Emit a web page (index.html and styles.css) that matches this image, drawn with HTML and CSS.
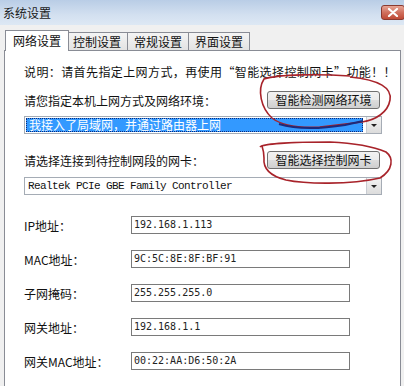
FILE: index.html
```html
<!DOCTYPE html>
<html lang="zh-CN">
<head>
  <meta charset="UTF-8">
  <title>系统设置</title>
  <link rel="stylesheet" href="styles.css">
</head>
<body>
  <div class="window">
    <div class="titlebar">
      <span class="title">系统设置</span>
      <span class="close">
        <svg width="12" height="9" viewBox="0 0 12 9"><path d="M2 1 L10 8 M10 1 L2 8" stroke="#fff" stroke-width="2.2" stroke-linecap="round"/></svg>
      </span>
    </div>

    <div class="tabs">
      <div class="tab active">网络设置</div>
      <div class="tab">控制设置</div>
      <div class="tab">常规设置</div>
      <div class="tab">界面设置</div>
    </div>

    <div class="panel">
      <p class="note">说明：请首先指定上网方式，再使用“智能选择控制网卡”功能！！</p>

      <div class="row">
        <span>请您指定本机上网方式及网络环境：</span>
        <button class="btn">智能检测网络环境</button>
      </div>
      <div class="combo selected">
        <span class="value">我接入了局域网，并通过路由器上网</span>
        <span class="arrow"></span>
      </div>

      <div class="row second">
        <span>请选择连接到待控制网段的网卡：</span>
        <button class="btn">智能选择控制网卡</button>
      </div>
      <div class="combo">
        <span class="value mono">Realtek PCIe GBE Family Controller</span>
        <span class="arrow"></span>
      </div>

      <div class="fields">
        <label>IP地址：</label><div class="field">192.168.1.113</div>
        <label>MAC地址：</label><div class="field">9C:5C:8E:8F:BF:91</div>
        <label>子网掩码：</label><div class="field">255.255.255.0</div>
        <label>网关地址：</label><div class="field">192.168.1.1</div>
        <label>网关MAC地址：</label><div class="field">00:22:AA:D6:50:2A</div>
      </div>
    </div>

    <!-- 手绘标记 -->
    <svg class="marks" width="404" height="386" viewBox="0 0 404 386">
      <path d="M350 76 C320 74 280 74 264 79 C257 90 261 108 272 118 C282 126 300 128 320 127 L362 122 C376 120 388 112 390 100 C392 88 380 80 350 77" fill="none" stroke="#a8232a" stroke-width="1.6"/>
      <path d="M279 124 C295 129 320 129 345 125 L363 121" fill="none" stroke="#1d2a7a" stroke-width="2"/>
      <path d="M260 147 C262 144 290 142 330 142 C352 143 372 146 386 152 C394 158 393 170 380 178 C350 185 305 184 286 180 C270 176 263 168 264 158 C264 152 263 149 262 146" fill="none" stroke="#a8232a" stroke-width="1.6"/>
    </svg>
  </div>
</body>
</html>
```

FILE: styles.css
```css
body {
  margin: 0;
  font-family: "Noto Sans CJK SC", "Liberation Sans", sans-serif;
  font-size: 12px;
  color: #111;
  background-color: #f0f0f0;
}
.window {
  position: relative;
  width: 404px;
  height: 386px;
  overflow: hidden;
  background-color: #f0f0f0;
}
.titlebar {
  height: 25px;
  box-sizing: border-box;
  padding: 5px 0 0 3px;
  display: flex;
  justify-content: space-between;
  align-items: flex-start;
  background: linear-gradient(#b9cde6, #d3e0f0 60%, #dde8f4);
}
.title {
  line-height: 15px;
  font-size: 12px;
  color: #1a1a1a;
}
.close {
  width: 24px;
  height: 15px;
  box-sizing: border-box;
  margin-right: -1px;
  border: 1px solid #8a3a30;
  border-radius: 3px;
  background: linear-gradient(#e7a596, #d0705e 50%, #bf4a36);
  display: flex;
  align-items: center;
  justify-content: center;
}
.tabs {
  height: 20px;
  padding: 5px 0 0 7px;
  display: flex;
  align-items: flex-end;
}
.tab {
  height: 17px;
  line-height: 17px;
  padding: 0 6px;
  border: 1px solid #898c95;
  border-bottom: none;
  margin-left: -1px;
  background: linear-gradient(#f4f4f4, #e3e3e3);
  font-size: 12px;
}
.tab.active {
  position: relative;
  z-index: 1;
  height: 20px;
  line-height: 19px;
  margin: 0 -2px -1px -2px;
  padding: 0 7px;
  background: #fff;
}
.panel {
  width: 397px;
  height: 340px;
  margin-left: 4px;
  border: 1px solid #898c95;
  background-color: #fff;
  padding-left: 19px;
  box-sizing: border-box;
}
.note {
  margin: 13px 0 0;
  line-height: 16px;
  letter-spacing: 0.4px;
  white-space: nowrap;
}
.row {
  width: 356px;
  height: 18px;
  margin-top: 11px;
  display: flex;
  justify-content: space-between;
  align-items: center;
}
.row.second {
  margin-top: 17px;
}
.btn {
  width: 113px;
  height: 18px;
  padding: 0;
  border: 1px solid #707070;
  border-radius: 3px;
  background: linear-gradient(#f2f2f2, #ebebeb 50%, #dddddd 51%, #cfcfcf);
  font-family: "Noto Sans CJK SC", sans-serif;
  font-size: 12px;
  line-height: 16px;
  color: #111;
}
.combo {
  width: 358px;
  height: 18px;
  margin-top: 8px;
  box-sizing: border-box;
  border: 1px solid #a5acb5;
  display: flex;
  align-items: stretch;
}
.combo.selected {
  margin-top: 7px;
}
.combo .value {
  flex: 1;
  padding-left: 3px;
  line-height: 16px;
  white-space: nowrap;
}
.combo.selected .value {
  margin: 1px 3px 1px 1px;
  padding-left: 2px;
  line-height: 12px;
  background-color: #3399ff;
  color: #fff;
  border: 1px dotted #0d2a7a;
}
.mono {
  font-family: "Liberation Mono", monospace;
  font-size: 11px;
  letter-spacing: -0.6px;
}
.arrow {
  width: 15px;
  box-sizing: border-box;
  border-left: 1px solid #c8ccd2;
  background: linear-gradient(#f3f3f3, #dcdcdc);
  display: flex;
  align-items: center;
  justify-content: center;
}
.arrow::after {
  content: "";
  border-left: 3px solid transparent;
  border-right: 3px solid transparent;
  border-top: 3px solid #222;
}
.fields {
  margin-top: 21px;
  display: grid;
  grid-template-columns: 107px 219px;
  grid-auto-rows: 18px;
  row-gap: 16px;
  align-items: center;
}
.fields label {
  white-space: nowrap;
}
.field {
  height: 18px;
  box-sizing: border-box;
  border: 1px solid #7a7a7a;
  padding-left: 2px;
  font-family: "DejaVu Sans Mono", monospace;
  font-size: 10px;
  line-height: 16px;
  color: #222;
}
.marks {
  position: absolute;
  top: 0;
  left: 0;
  pointer-events: none;
}
```
